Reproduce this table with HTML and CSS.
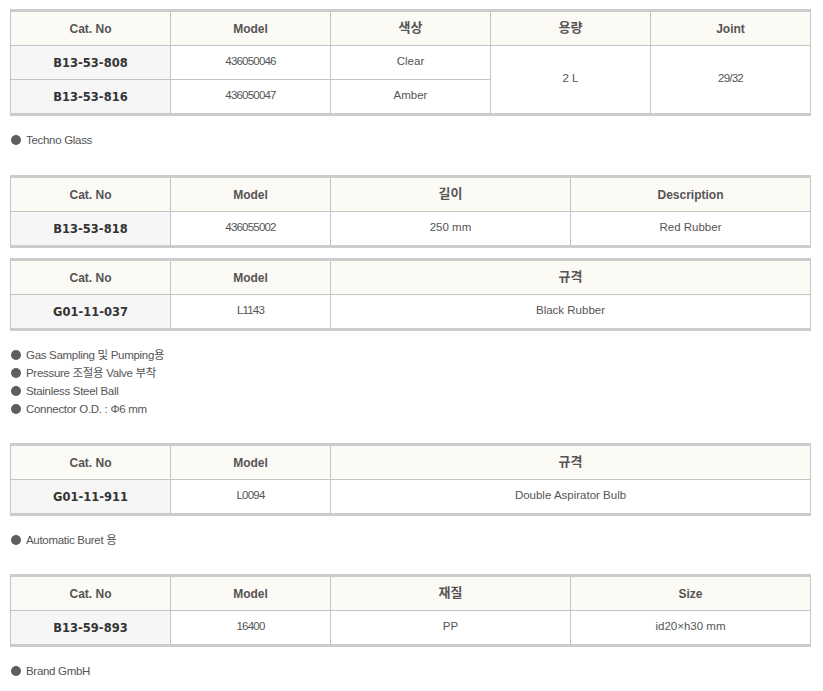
FILE: index.html
```html
<!DOCTYPE html>
<html lang="ko">
<head>
<meta charset="utf-8">
<title>Products</title>
<link rel="stylesheet" href="styles.css">
</head>
<body>
<div class="page">
  <table class="spec t1">
    <colgroup><col class="w160"><col class="w160"><col class="w160"><col class="w160"><col class="w160"></colgroup>
    <tr><th>Cat. No</th><th>Model</th><th class="ko">색상</th><th class="ko">용량</th><th>Joint</th></tr>
    <tr><td class="cat">B13-53-808</td><td class="num">436050046</td><td>Clear</td><td rowspan="2">2 L</td><td rowspan="2" class="num">29/32</td></tr>
    <tr class="last"><td class="cat">B13-53-816</td><td class="num">436050047</td><td>Amber</td></tr>
  </table>
  <ul class="notes first">
    <li>Techno Glass</li>
  </ul>

  <table class="spec">
    <colgroup><col class="w160"><col class="w160"><col class="w240"><col class="w240"></colgroup>
    <tr><th>Cat. No</th><th>Model</th><th class="ko">길이</th><th>Description</th></tr>
    <tr class="last"><td class="cat">B13-53-818</td><td class="num">436055002</td><td>250 mm</td><td>Red Rubber</td></tr>
  </table>
  <table class="spec gap">
    <colgroup><col class="w160"><col class="w160"><col class="w480"></colgroup>
    <tr><th>Cat. No</th><th>Model</th><th class="ko">규격</th></tr>
    <tr class="last"><td class="cat">G01-11-037</td><td class="num">L1143</td><td>Black Rubber</td></tr>
  </table>
  <ul class="notes">
    <li>Gas Sampling 및 Pumping용</li>
    <li>Pressure 조절용 Valve 부착</li>
    <li>Stainless Steel Ball</li>
    <li>Connector O.D. : Φ6 mm</li>
  </ul>

  <table class="spec">
    <colgroup><col class="w160"><col class="w160"><col class="w480"></colgroup>
    <tr><th>Cat. No</th><th>Model</th><th class="ko">규격</th></tr>
    <tr class="last"><td class="cat">G01-11-911</td><td class="num">L0094</td><td>Double Aspirator Bulb</td></tr>
  </table>
  <ul class="notes">
    <li>Automatic Buret 용</li>
  </ul>

  <table class="spec">
    <colgroup><col class="w160"><col class="w160"><col class="w240"><col class="w240"></colgroup>
    <tr><th>Cat. No</th><th>Model</th><th class="ko">재질</th><th>Size</th></tr>
    <tr class="last"><td class="cat">B13-59-893</td><td class="num">16400</td><td>PP</td><td>id20×h30 mm</td></tr>
  </table>
  <ul class="notes">
    <li>Brand GmbH</li>
  </ul>
</div>
</body>
</html>
```
FILE: styles.css
```css
html, body {
  margin: 0;
  padding: 0;
  background: #ffffff;
}
.page {
  padding: 9px 13px 0 10px;
  font-family: "Liberation Sans", "Noto Sans CJK KR", sans-serif;
  color: #555555;
}
.spec {
  width: 800px;
  table-layout: fixed;
  border-collapse: separate;
  border-spacing: 0;
  border-top: 3px solid #cccccc;
  border-bottom: 3px solid #cccccc;
  border-left: 1px solid #c4c4c4;
}
.spec.gap { margin-top: 10px; }
.w160 { width: 160px; }
.w240 { width: 240px; }
.w480 { width: 480px; }
.spec th,
.spec td {
  height: 34px;
  padding: 0 4px;
  box-sizing: border-box;
  border-right: 1px solid #c4c4c4;
  border-bottom: 1px solid #c4c4c4;
  text-align: center;
  vertical-align: middle;
}
.spec tr.last td { border-bottom: none; height: 33px; }
.spec td[rowspan] { border-bottom: none; }
.spec th {
  background: #fcfaf5;
  font-size: 12px;
  font-weight: bold;
  color: #555555;
  padding-top: 1px;
}
.spec th.ko {
  font-family: "Noto Sans CJK KR", sans-serif;
  font-size: 13px;
  padding-top: 0;
  padding-bottom: 4px;
}
.spec td {
  font-size: 11.5px;
  color: #555555;
  padding-bottom: 3px;
}
.spec td.num { letter-spacing: -0.8px; }
.spec td.cat {
  background: #f6f6f6;
  font-family: "DejaVu Sans", sans-serif;
  font-weight: bold;
  font-size: 11.5px;
  color: #333333;
  padding-bottom: 0;
  padding-top: 1px;
}
.notes {
  list-style: none;
  margin: 15px 0 25px 0;
  padding: 0;
}
.notes.first { margin-bottom: 26px; }
.notes li {
  display: flex;
  align-items: center;
  gap: 5px;
  height: 18px;
  font-size: 11.5px;
  line-height: 18px;
  color: #555555;
  letter-spacing: -0.3px;
}
.notes li::before {
  content: "";
  width: 10px;
  height: 10px;
  border-radius: 50%;
  background: #5e5e5e;
  flex: none;
  margin-left: 1px;
}
```
